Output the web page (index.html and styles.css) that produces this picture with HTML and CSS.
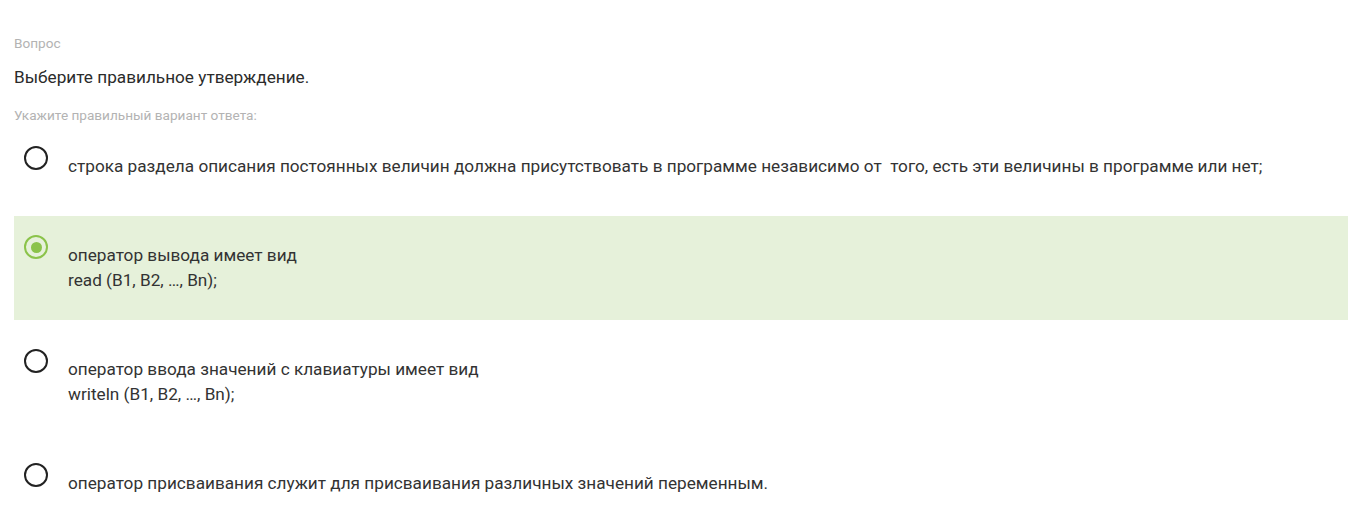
FILE: index.html
```html
<!DOCTYPE html>
<html lang="ru">
<head>
<meta charset="utf-8">
<link rel="stylesheet" href="styles.css">
</head>
<body>
<div class="quiz">
  <div class="label">Вопрос</div>
  <div class="question">Выберите правильное утверждение.</div>
  <div class="hint">Укажите правильный вариант ответа:</div>
  <div class="options">
    <div class="option">
      <span class="radio"></span>
      <div class="text">строка раздела описания постоянных величин должна присутствовать в программе независимо от&nbsp; того, есть эти величины в программе или нет;</div>
    </div>
    <div class="option selected">
      <span class="radio"></span>
      <div class="text">оператор вывода имеет вид<br>read (B1, B2, …, Bn);</div>
    </div>
    <div class="option">
      <span class="radio"></span>
      <div class="text">оператор ввода значений с клавиатуры имеет вид<br>writeln (B1, B2, …, Bn);</div>
    </div>
    <div class="option">
      <span class="radio"></span>
      <div class="text">оператор присваивания служит для присваивания различных значений переменным.</div>
    </div>
  </div>
</div>
</body>
</html>
```
FILE: styles.css
```css
html, body {
  margin: 0;
  padding: 0;
  background: #fff;
}
body {
  font-family: Roboto, "Noto Sans", sans-serif;
  color: #333;
}
.quiz {
  padding: 33px 0 0 14px;
}
.label {
  font-size: 13.6px;
  line-height: 20px;
  color: #b3b3b3;
}
.question {
  margin-top: 12px;
  font-size: 17.2px;
  line-height: 24px;
  color: #2b2b2b;
}
.hint {
  margin-top: 16px;
  font-size: 13.6px;
  line-height: 20px;
  color: #b3b3b3;
}
.options {
  margin-top: 2px;
  display: flex;
  flex-direction: column;
  gap: 10px;
}
.option {
  display: flex;
  align-items: flex-start;
  padding: 19px 0 27px 10px;
}
.option.selected {
  background: #e6f1da;
}
.radio {
  flex: none;
  box-sizing: border-box;
  width: 24px;
  height: 24px;
  border: 2.5px solid #222;
  border-radius: 50%;
  position: relative;
}
.selected .radio {
  border-color: #8bc34a;
}
.selected .radio::after {
  content: "";
  position: absolute;
  left: 50%;
  top: 50%;
  width: 11px;
  height: 11px;
  margin: -5.5px 0 0 -5.5px;
  border-radius: 50%;
  background: #8bc34a;
}
.text {
  margin: 8px 0 0 20px;
  font-size: 17.2px;
  line-height: 25px;
  color: #333;
}
```
